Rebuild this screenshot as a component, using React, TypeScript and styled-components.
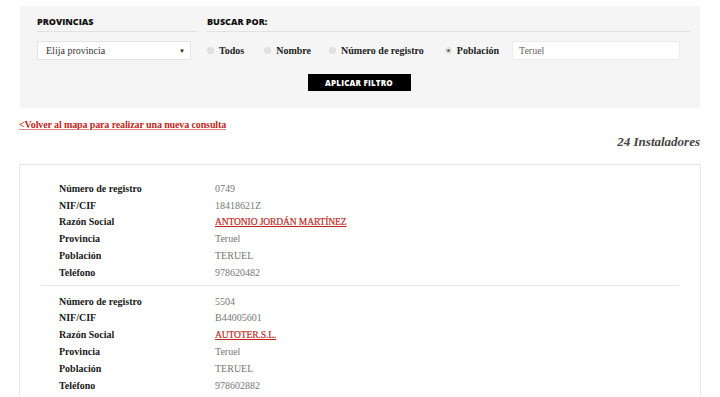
import React from 'react';
import styled, { createGlobalStyle } from 'styled-components';

const GlobalStyle = createGlobalStyle`
  html, body {
    margin: 0;
    padding: 0;
    background: #fff;
    overflow: hidden;
  }
  body {
    font-family: 'Liberation Serif', 'Times New Roman', serif;
    color: #222;
  }
`;

const Page = styled.div`
  width: 720px;
  padding-top: 6px;
`;

const FilterPanel = styled.div`
  margin-left: 20px;
  width: 680px;
  box-sizing: border-box;
  background: #f5f5f5;
  padding: 9px 10px 17px 17px;
`;

const FilterRow = styled.div`
  display: flex;
  gap: 9px;
`;

const Column = styled.div<{ $width: number }>`
  width: ${(p) => p.$width}px;
`;

const Heading = styled.div`
  font-family: 'Open Sans', sans-serif;
  font-weight: 800;
  font-size: 9px;
  line-height: 14px;
  text-transform: uppercase;
  padding-bottom: 2px;
  border-bottom: 1px solid #e2e2e2;
  color: #111;
`;

const Controls = styled.div`
  display: flex;
  align-items: center;
  height: 19px;
  margin-top: 9px;
`;

const Select = styled.div`
  width: 154px;
  height: 19px;
  box-sizing: border-box;
  background: #fff;
  border: 1px solid #e4e4e4;
  display: flex;
  align-items: center;
  justify-content: space-between;
  padding: 0 5px 0 8px;
  font-size: 10px;
  color: #333;
`;

const Caret = styled.span`
  font-size: 6px;
  color: #222;
`;

const RadioItem = styled.label<{ $gap: number }>`
  display: flex;
  align-items: center;
  gap: 5px;
  margin-right: ${(p) => p.$gap}px;
  font-size: 10px;
  font-weight: bold;
  color: #222;
`;

const RadioDot = styled.span<{ $checked?: boolean }>`
  width: 7px;
  height: 7px;
  border-radius: 50%;
  box-sizing: border-box;
  background: ${(p) => (p.$checked ? '#ececec' : '#e3e3e3')};
  border: 1px solid #d9d9d9;
  display: flex;
  align-items: center;
  justify-content: center;
  &::after {
    content: '';
    display: ${(p) => (p.$checked ? 'block' : 'none')};
    width: 3px;
    height: 3px;
    border-radius: 50%;
    background: #666;
  }
`;

const TextInput = styled.div`
  width: 168px;
  height: 19px;
  margin-left: auto;
  margin-right: 10px;
  box-sizing: border-box;
  background: #fff;
  border: 1px solid #ececec;
  padding-left: 6px;
  display: flex;
  align-items: center;
  font-size: 10px;
  color: #666;
`;

const ButtonRow = styled.div`
  display: flex;
  justify-content: center;
  margin-top: 14px;
  padding-right: 9px;
`;

const ApplyButton = styled.button`
  width: 103px;
  height: 17px;
  border: none;
  background: #000;
  color: #fff;
  font-family: 'Open Sans', sans-serif;
  font-weight: 800;
  font-size: 8px;
  letter-spacing: 0.2px;
  padding: 0;
`;

const BackLink = styled.a`
  display: block;
  margin: 10px 0 0 19px;
  font-size: 10px;
  line-height: 14px;
  font-weight: bold;
  letter-spacing: -0.12px;
  color: #c0281d;
  text-decoration: underline;
  text-decoration-color: #e08a85;
  text-underline-offset: 1px;
`;

const Count = styled.div`
  width: 700px;
  text-align: right;
  margin-top: 2px;
  font-size: 13px;
  line-height: 16px;
  font-style: italic;
  font-weight: bold;
  color: #444;
`;

const Card = styled.div`
  margin: 14px 0 0 19px;
  width: 682px;
  box-sizing: border-box;
  border: 1px solid #e6e6e6;
  padding: 9px 21px 12px 21px;
`;

const Entry = styled.div<{ $last?: boolean }>`
  padding: 6px 0 4px 18px;
  border-bottom: ${(p) => (p.$last ? 'none' : '1px solid #e6e6e6')};
  margin-bottom: ${(p) => (p.$last ? 0 : 1)}px;
`;

const Field = styled.div`
  display: flex;
  height: 16.8px;
  align-items: center;
  font-size: 10px;
`;

const Label = styled.span`
  width: 156px;
  font-weight: bold;
  color: #1a1a1a;
`;

const Value = styled.span`
  color: #777;
`;

const CompanyLink = styled.a`
  color: #c0281d;
  font-size: 9.5px;
  letter-spacing: -0.1px;
  text-decoration: underline;
  text-underline-offset: 1px;
  -webkit-text-stroke: 0.2px #c0281d;
`;

interface Installer {
  registro: string;
  nif: string;
  razon: string;
  provincia: string;
  poblacion: string;
  telefono: string;
}

const installers: Installer[] = [
  {
    registro: '0749',
    nif: '18418621Z',
    razon: 'ANTONIO JORDÁN MARTÍNEZ',
    provincia: 'Teruel',
    poblacion: 'TERUEL',
    telefono: '978620482',
  },
  {
    registro: '5504',
    nif: 'B44005601',
    razon: 'AUTOTER.S.L.',
    provincia: 'Teruel',
    poblacion: 'TERUEL',
    telefono: '978602882',
  },
];

const radios = [
  { label: 'Todos', gap: 20 },
  { label: 'Nombre', gap: 18 },
  { label: 'Número de registro', gap: 21 },
  { label: 'Población', gap: 0, checked: true },
];

const App: React.FC = () => {
  return (
    <Page>
      <GlobalStyle />
      <FilterPanel>
        <FilterRow>
          <Column $width={161}>
            <Heading>Provincias</Heading>
            <Controls>
              <Select>
                <span>Elija provincia</span>
                <Caret>▼</Caret>
              </Select>
            </Controls>
          </Column>
          <Column $width={483}>
            <Heading>Buscar por:</Heading>
            <Controls>
              {radios.map((r) => (
                <RadioItem key={r.label} $gap={r.gap}>
                  <RadioDot $checked={r.checked} />
                  {r.label}
                </RadioItem>
              ))}
              <TextInput>Teruel</TextInput>
            </Controls>
          </Column>
        </FilterRow>
        <ButtonRow>
          <ApplyButton>APLICAR FILTRO</ApplyButton>
        </ButtonRow>
      </FilterPanel>
      <BackLink href="#">&lt;Volver al mapa para realizar una nueva consulta</BackLink>
      <Count>24 Instaladores</Count>
      <Card>
        {installers.map((it, i) => (
          <Entry key={it.registro} $last={i === installers.length - 1}>
            <Field>
              <Label>Número de registro</Label>
              <Value>{it.registro}</Value>
            </Field>
            <Field>
              <Label>NIF/CIF</Label>
              <Value>{it.nif}</Value>
            </Field>
            <Field>
              <Label>Razón Social</Label>
              <CompanyLink href="#">{it.razon}</CompanyLink>
            </Field>
            <Field>
              <Label>Provincia</Label>
              <Value>{it.provincia}</Value>
            </Field>
            <Field>
              <Label>Población</Label>
              <Value>{it.poblacion}</Value>
            </Field>
            <Field>
              <Label>Teléfono</Label>
              <Value>{it.telefono}</Value>
            </Field>
          </Entry>
        ))}
      </Card>
    </Page>
  );
};

export default App;
